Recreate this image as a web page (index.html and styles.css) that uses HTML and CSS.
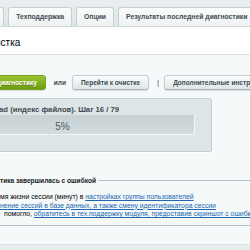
FILE: index.html
```html
<!DOCTYPE html>
<html lang="ru">
<head>
<meta charset="utf-8">
<link rel="stylesheet" href="styles.css">
</head>
<body>
<div class="tabs">
  <div class="tab tab-first">Сканер</div>
  <div class="tab">Техподдержка</div>
  <div class="tab">Опции</div>
  <div class="tab">Результаты последней диагностики</div>
</div>
<div class="title"><h1>Очистка</h1></div>
<div class="content">
  <div class="actions">
    <button class="btn btn-green">Запустить диагностику</button>
    <span class="or">или</span>
    <button class="btn">Перейти к очистке</button>
    <span class="sep">|</span>
    <button class="btn">Дополнительные инструменты</button>
  </div>
  <div class="progress">
    <div class="progress-text">Сканирование: /upload (индекс файлов). Шаг 16 / 79</div>
    <div class="bar"><span class="bar-value">5%</span></div>
  </div>
  <fieldset class="result">
    <legend><span class="legend-pre">Диагнос</span>тика завершилась с ошибкой</legend>
    <div class="line"><span class="pre">Увеличьте вре</span><span class="rest">мя жизни сессии (минут) в <a href="#">настройках группы пользователей</a></span></div>
    <div class="line"><span class="pre"><a href="#">Отключите хра</a></span><span class="rest"><a href="#">нение сессий в базе данных, а также смену идентификатора сессии</a></span></div>
    <div class="line"><span class="pre">Если это не</span><span class="rest rest-gap">помогло, <a href="#">обратитесь в тех.поддержку модуля, предоставив скриншот с ошибкой</a></span></div>
  </fieldset>
  <div class="footer"></div>
</div>
</body>
</html>
```

FILE: styles.css
```css
html, body {
  margin: 0;
  padding: 0;
}
body {
  width: 250px;
  height: 250px;
  overflow: hidden;
  background: #f5f9f9;
  font-family: "Liberation Sans", Arial, sans-serif;
  color: #000;
}
.tabs {
  height: 27px;
  box-sizing: border-box;
  background: linear-gradient(#e9eef0, #dfe6e8);
  border-bottom: 1px solid #cfd7da;
  display: flex;
  align-items: flex-end;
  gap: 4px;
  white-space: nowrap;
}
.tab {
  height: 18px;
  line-height: 18px;
  padding: 0 7px;
  background: linear-gradient(#fbfcfc, #eef2f3);
  border: 1px solid #c6cfd2;
  border-bottom: none;
  border-radius: 3px 3px 0 0;
  font-size: 6.8px;
  font-weight: bold;
  color: #3e4b53;
  flex: none;
}
.tab-first {
  margin-left: -36px;
}
.title {
  height: 28px;
  box-sizing: border-box;
  background: #fff;
  border-bottom: 1px solid #d9e1e3;
  padding-top: 4px;
}
.title h1 {
  margin: 0 0 0 -18px;
  font-size: 10px;
  font-weight: normal;
  line-height: 24px;
  white-space: nowrap;
}
.content {
  margin-left: -86px;
}
.actions {
  display: flex;
  align-items: center;
  padding-top: 20px;
  white-space: nowrap;
}
.btn {
  height: 15px;
  box-sizing: border-box;
  padding: 0 8px;
  font-family: inherit;
  font-size: 6.5px;
  font-weight: bold;
  color: #3d4b53;
  background: linear-gradient(#fbfdfd, #dfe6e8);
  border: 1px solid #c3cdd0;
  border-bottom-color: #a9b5b9;
  border-radius: 3px;
  box-shadow: 0 1px 1px rgba(0, 0, 0, 0.12);
}
.btn-green {
  margin-left: 39px;
  color: #fff;
  background: linear-gradient(#9bc631, #6e9c14);
  border-color: #75a01a;
  text-shadow: 0 1px 0 rgba(0, 0, 0, 0.25);
}
.or {
  font-size: 6.5px;
  font-weight: bold;
  color: #3d4b53;
  margin: 0 6px 0 8px;
}
.sep {
  font-size: 8px;
  color: #54457a;
  margin: 0 5px 0 8px;
}
.progress {
  width: 298px;
  box-sizing: border-box;
  margin-top: 8px;
  padding: 6px 16px 16px;
  background: #dde5e7;
  border: 1px solid #c4ced1;
  border-radius: 2px;
  box-shadow: 0 1px 0 #fff;
}
.progress-text {
  margin-left: -10px;
  font-size: 7.7px;
  font-weight: bold;
  line-height: 10px;
  color: #3d4b53;
  white-space: nowrap;
}
.bar {
  height: 20px;
  box-sizing: border-box;
  background: linear-gradient(#c8d2d4, #d2dbdd);
  border-bottom: 1px solid #f3f6f7;
  border-right: 1px solid #f3f6f7;
  text-align: center;
  line-height: 20px;
}
.bar-value {
  font-size: 10px;
  color: #4d5c63;
}
.result {
  margin: 25px 0 0 0;
  padding: 9px 10px 6px 5px;
  width: 400px;
  border: 1px solid #b5c0c3;
  border-width: 1px 0 1px 1px;
}
.result legend {
  font-size: 6.6px;
  font-weight: bold;
  color: #222;
  padding: 0 2px;
  margin-left: 38px;
  white-space: nowrap;
}
.legend-pre {
  display: inline-block;
  width: 40px;
  text-align: right;
}
.line {
  display: flex;
  font-size: 6.8px;
  line-height: 8.5px;
  white-space: nowrap;
}
.pre {
  flex: none;
  width: 80px;
  text-align: right;
}
.rest-gap {
  padding-left: 4px;
}
.line a {
  color: #2067b0;
}
.footer {
  margin-top: 18px;
  height: 10px;
  background: #e7ecec;
  border-top: 1px solid #dde3e4;
}
```
